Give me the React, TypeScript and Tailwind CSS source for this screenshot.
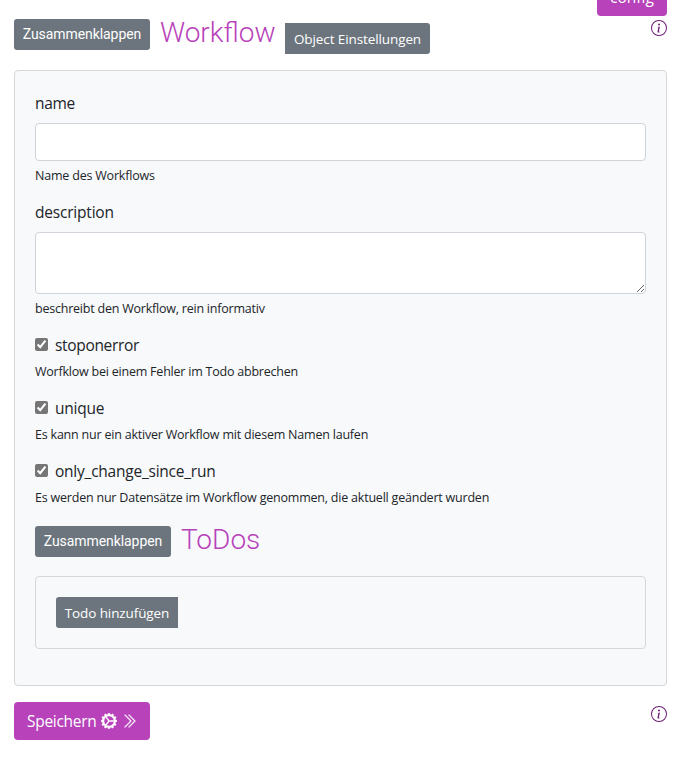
import { BsChevronDoubleRight, BsGearWideConnected, BsInfoCircle } from "react-icons/bs";

const ui = "font-['Open_Sans','Noto_Sans',sans-serif]";

function Collapse() {
  return (
    <button className="h-[31px] w-[136px] shrink-0 whitespace-nowrap rounded-[3px] bg-[#6c757d] text-center font-['Roboto',sans-serif] text-[14px] leading-[31px] tracking-[-0.07px] text-white">
      Zusammenklappen
    </button>
  );
}

function Help({ text, track }: { text: string; track: string }) {
  return <small className={`block h-5 whitespace-nowrap pt-px text-[12.5px] leading-5 ${track}`}>{text}</small>;
}

function Check({ label, help, labelTrack, helpTrack }: { label: string; help: string; labelTrack: string; helpTrack: string }) {
  return (
    <div className="h-[63px]">
      <label className="flex h-6 items-center">
        <input type="checkbox" defaultChecked className="mb-[2px] size-[13px] accent-[#767676]" />
        <span className={`ml-[7px] text-[15.5px] leading-6 ${labelTrack}`}>{label}</span>
      </label>
      <div className="mt-1">
        <Help text={help} track={helpTrack} />
      </div>
    </div>
  );
}

export default function App() {
  return (
    <div className={`h-[770px] w-[678px] overflow-hidden bg-white pl-[14px] pr-[11px] text-[#212529] ${ui}`}>
      <header className="flex h-[70px] items-start">
        <div className="mt-[19px] flex"><Collapse /></div>
        <h1 className="ml-[10px] mt-[15px] w-[125px] whitespace-nowrap font-['Roboto',sans-serif] text-[28px] font-light leading-9 text-[#b742ba]">Workflow</h1>
        <button className="mt-[23px] h-[31px] w-[145px] whitespace-nowrap rounded-r-[3px] bg-[#6c757d] pt-px text-[13.5px] leading-[30px] tracking-[-0.1px] text-white">Object Einstellungen</button>
        <div className="ml-auto flex flex-col items-end">
          <button className="-mt-[22px] h-[38px] w-[70px] rounded-[4px] bg-[#b742ba] pt-px text-[15.5px] leading-[37px] text-white">config</button>
          <BsInfoCircle className="mt-1 size-4 text-[#6f1d78]" />
        </div>
      </header>

      <section className="h-[616px] rounded-[4px] border border-[#d5d7da] bg-[#f8f9fb] p-5">
        <div className="h-[109px]">
          <label className="block h-6 text-[15.5px] leading-6 tracking-[-0.35px]">name</label>
          <input className="mb-1 mt-2 block h-[38px] w-full rounded-[4px] border border-[#ced4da] bg-white px-3" />
          <Help text="Name des Workflows" track="tracking-[-0.2px]" />
        </div>
        <div className="h-[133px]">
          <label className="block h-6 text-[15.5px] leading-6 tracking-[-0.2px]">description</label>
          <textarea className="mb-1 mt-2 block h-[62px] w-full resize rounded-[4px] border border-[#ced4da] bg-white px-3" />
          <Help text="beschreibt den Workflow, rein informativ" track="tracking-[-0.22px]" />
        </div>
        <Check label="stoponerror" help="Worfklow bei einem Fehler im Todo abbrechen" labelTrack="tracking-[-0.33px]" helpTrack="tracking-[-0.22px]" />
        <Check label="unique" help="Es kann nur ein aktiver Workflow mit diesem Namen laufen" labelTrack="tracking-[-0.25px]" helpTrack="tracking-[-0.21px]" />
        <Check label="only_change_since_run" help="Es werden nur Datensätze im Workflow genommen, die aktuell geändert wurden" labelTrack="tracking-[-0.23px]" helpTrack="tracking-[-0.21px]" />
        <div className="flex h-[54px] items-start pt-1">
          <Collapse />
          <h2 className="-mt-1 ml-[10px] font-['Roboto',sans-serif] text-[28px] font-light leading-9 text-[#b742ba]">ToDos</h2>
        </div>
        <div className="h-[73px] rounded-[4px] border border-[#d5d7da] p-5">
          <button className="block h-[31px] w-[122px] whitespace-nowrap rounded-l-[3px] bg-[#6c757d] pt-px text-[13.5px] leading-[30px] tracking-[-0.1px] text-white">Todo hinzufügen</button>
        </div>
      </section>

      <footer className="mt-4 flex items-start justify-between">
        <button className="flex h-[38px] w-[136px] items-center rounded-[4px] bg-[#b742ba] pl-[13px] text-white">
          <span className="w-[74px] whitespace-nowrap text-left text-[15.5px] leading-[38px] tracking-[-0.3px]">Speichern</span>
          <BsGearWideConnected className="size-4" strokeWidth={0.5} />
          <BsChevronDoubleRight className="ml-1 size-4" strokeWidth={0.3} />
        </button>
        <BsInfoCircle className="mt-1 size-4 text-[#6f1d78]" />
      </footer>
    </div>
  );
}
